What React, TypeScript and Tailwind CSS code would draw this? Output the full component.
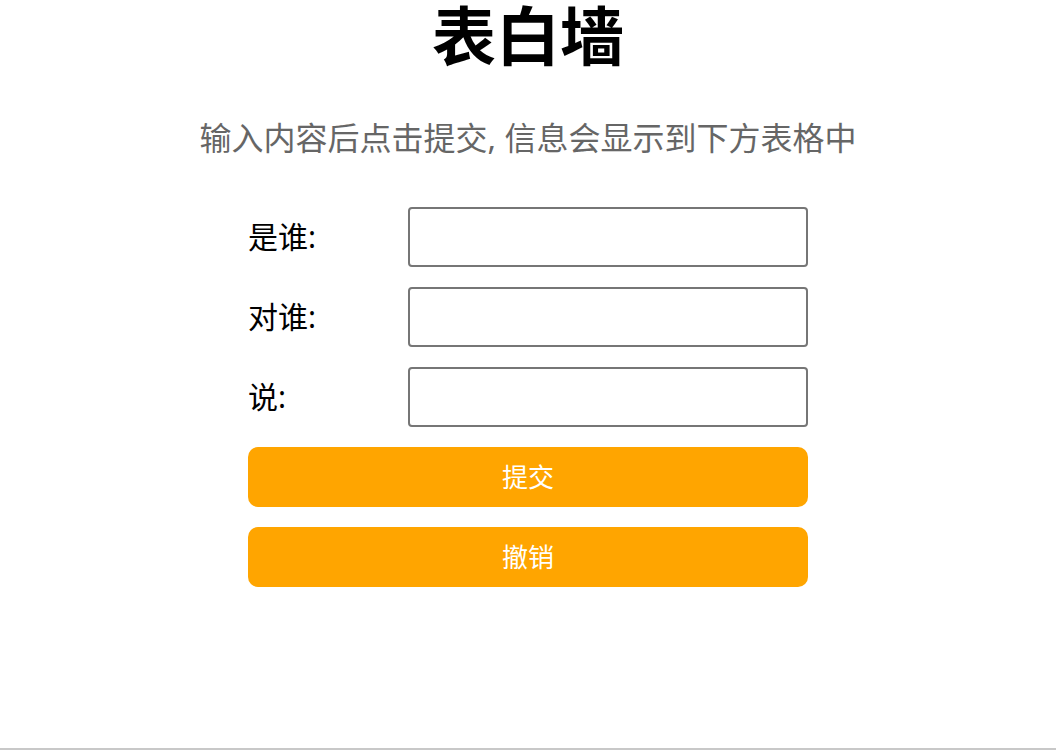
const font = { fontFamily: '"Noto Sans", "Noto Sans CJK SC", sans-serif' };

const fields = ["是谁:", "对谁:", "说:"];

const FormRow = ({ label }: { label: string }) => (
  <div className="flex items-center h-[60px]">
    <span className="w-[160px] text-[30px] text-black leading-none">{label}</span>
    <input
      type="text"
      className="w-[400px] h-[60px] border-2 border-[#767676] rounded-[4px] bg-white outline-none px-2 text-[24px]"
    />
  </div>
);

export default function App() {
  return (
    <div className="w-full bg-white" style={font}>
      <div className="w-[560px] mx-auto flex flex-col">
        <h1 className="text-center text-[64px] font-bold leading-[72px] text-black mt-0">表白墙</h1>
        <p className="text-center text-[32px] text-[#666666] leading-none mt-[50px] whitespace-nowrap -mx-20">
          输入内容后点击提交, 信息会显示到下方表格中
        </p>
        <div className="flex flex-col gap-[20px] mt-[53px]">
          {fields.map((f) => (
            <FormRow key={f} label={f} />
          ))}
          <button className="w-full h-[60px] rounded-[10px] bg-[#FFA500] text-white text-[26px]">提交</button>
          <button className="w-full h-[60px] rounded-[10px] bg-[#FFA500] text-white text-[26px]">撤销</button>
        </div>
      </div>
      <div className="mt-[161px] border-t-2 border-[#c8c8c8] h-0" />
    </div>
  );
}
